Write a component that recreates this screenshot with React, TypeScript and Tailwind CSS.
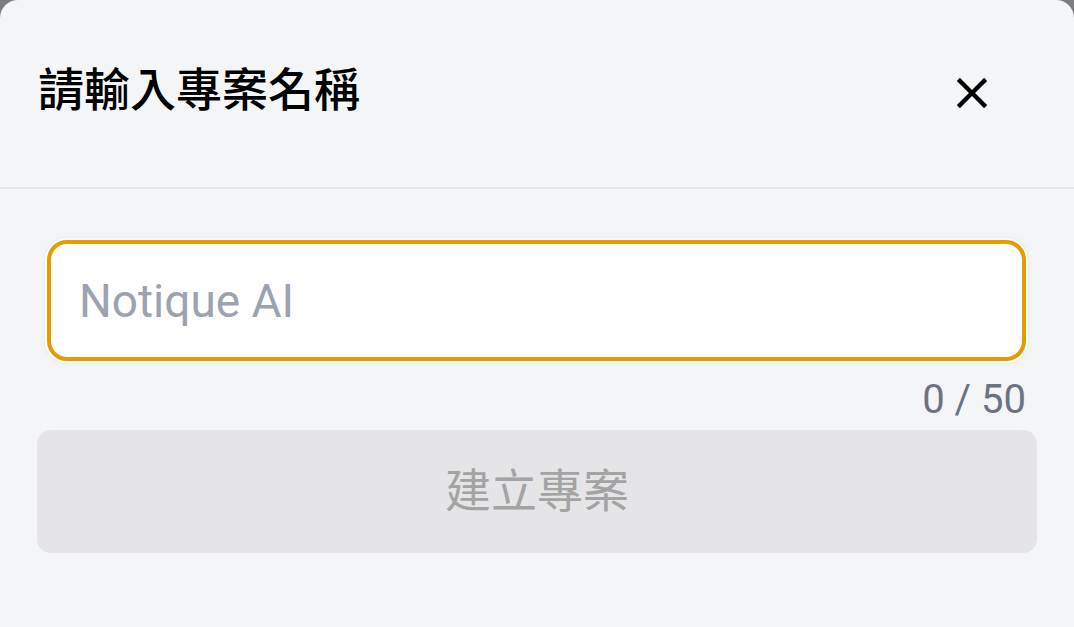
import { useState } from 'react'

const MAX_LENGTH = 50

function CloseIcon() {
  return (
    <svg viewBox="0 0 24 24" className="h-[52px] w-[52px]" fill="currentColor" aria-hidden="true">
      <path d="M19 6.41L17.59 5 12 10.59 6.41 5 5 6.41 10.59 12 5 17.59 6.41 19 12 13.41 17.59 19 19 17.59 13.41 12z" />
    </svg>
  )
}

export default function App() {
  const [name, setName] = useState('')
  const disabled = name.trim().length === 0

  return (
    <div className="h-[627px] w-full overflow-hidden bg-[#7d7d7f]">
      <div className="flex h-full flex-col rounded-t-[18px] bg-[#f4f5f7] font-['Roboto','Noto_Sans_CJK_TC',sans-serif]">
        <div className="flex h-[189px] shrink-0 items-center justify-between border-b-2 border-[#e6e7ea] pb-[8px] pl-[38px] pr-[76px]">
          <h2 className="text-[46px] font-medium leading-none text-black">請輸入專案名稱</h2>
          <button type="button" className="mt-[6px] text-black" aria-label="關閉">
            <CloseIcon />
          </button>
        </div>

        <div className="px-[37px] pt-[51px]">
          <div className="ml-[10px] mr-[11px]">
            <input
              value={name}
              maxLength={MAX_LENGTH}
              onChange={(e) => setName(e.target.value)}
              placeholder="Notique AI"
              className="block h-[121px] w-full rounded-[20px] border-4 border-[#e69b00] bg-white pl-[28px] text-[46px] text-gray-900 shadow-[0_0_0_2px_#ffffff,0_0_4px_3px_rgba(0,0,0,0.04)] outline-none placeholder:text-[#9ca3af]"
            />
            <p className="mt-[17px] text-right text-[40px] leading-[44px] text-[#6b7280]">
              {name.length} / {MAX_LENGTH}
            </p>
          </div>
          <button
            type="button"
            disabled={disabled}
            className="mt-[8px] flex h-[123px] w-full items-center justify-center rounded-[14px] bg-[#e5e5e7] text-[46px] text-[#a3a3a3]"
          >
            建立專案
          </button>
        </div>
      </div>
    </div>
  )
}
